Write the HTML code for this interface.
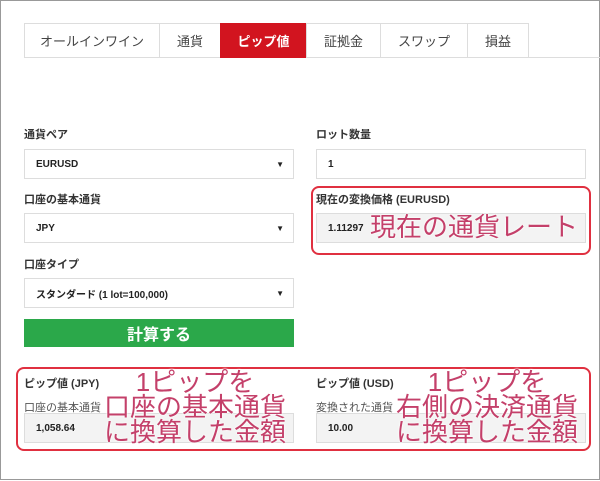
<!DOCTYPE html>
<html><head><meta charset="utf-8"><style>
*{margin:0;padding:0;box-sizing:border-box}
body{width:600px;height:481px;background:#fff;font-family:"Liberation Sans","Noto Sans CJK JP",sans-serif;position:relative;overflow:hidden;color:#333}
.frame{position:absolute;left:0;top:0;width:600px;height:480px;border:1px solid #999}
.tabline{position:absolute;left:24px;right:0;top:57px;border-top:1px solid #ddd}
.tab{position:absolute;top:23px;height:35px;border:1px solid #ddd;border-right:none;font-size:13px;display:flex;align-items:center;justify-content:center;color:#444}
.lab{position:absolute;font-size:11px;font-weight:bold;color:#333}
.box{position:absolute;height:30px;border:1px solid #ddd;font-size:10px;font-weight:bold;display:flex;align-items:center;padding-left:11px;color:#222}
.box .ar{position:absolute;right:9px;font-size:8px}
.gray{background:#f3f3f3}
.red{position:absolute;border:2px solid #e03040;border-radius:8px}
.big{position:absolute;color:#c4406a;font-size:26px;line-height:25px;text-align:center;white-space:nowrap;text-shadow:0 0 2px #fff,0 0 2px #fff}
</style></head><body>
<div class="frame"></div>
<div class="tabline"></div>
<div class="tab" style="left:24px;width:135px">オールインワイン</div>
<div class="tab" style="left:159px;width:61px">通貨</div>
<div class="tab" style="left:220px;width:86px;background:#d2141f;color:#fff;font-weight:bold;border-color:#d2141f">ピップ値</div>
<div class="tab" style="left:306px;width:74px">証拠金</div>
<div class="tab" style="left:380px;width:87px">スワップ</div>
<div class="tab" style="left:467px;width:62px;border-right:1px solid #ddd">損益</div>

<div class="lab" style="left:24px;top:126px">通貨ペア</div>
<div class="box" style="left:24px;top:149px;width:270px">EURUSD<span class="ar">▼</span></div>
<div class="lab" style="left:316px;top:126px">ロット数量</div>
<div class="box" style="left:316px;top:149px;width:270px">1</div>

<div class="lab" style="left:24px;top:191px">口座の基本通貨</div>
<div class="box" style="left:24px;top:213px;width:270px">JPY<span class="ar">▼</span></div>
<div class="red" style="left:311px;top:186px;width:280px;height:69px"></div>
<div class="lab" style="left:316px;top:191px">現在の変換価格 (EURUSD)</div>
<div class="box gray" style="left:316px;top:213px;width:270px">1.11297</div>
<div class="big" style="left:370px;top:215px">現在の通貨レート</div>

<div class="lab" style="left:24px;top:256px">口座タイプ</div>
<div class="box" style="left:24px;top:278px;width:270px">スタンダード (1 lot=100,000)<span class="ar">▼</span></div>
<div style="position:absolute;left:24px;top:319px;width:270px;height:28px;background:#2ba84a;color:#fff;font-weight:bold;font-size:16px;display:flex;align-items:center;justify-content:center">計算する</div>

<div class="red" style="left:16px;top:367px;width:575px;height:84px"></div>
<div class="lab" style="left:24px;top:375px">ピップ値 (JPY)</div>
<div class="lab" style="left:24px;top:399px;font-weight:normal;color:#555">口座の基本通貨</div>
<div class="box gray" style="left:24px;top:413px;width:270px">1,058.64</div>
<div class="lab" style="left:316px;top:375px">ピップ値 (USD)</div>
<div class="lab" style="left:316px;top:399px;font-weight:normal;color:#555">変換された通貨</div>
<div class="box gray" style="left:316px;top:413px;width:270px">10.00</div>
<div class="big" style="left:100px;width:190px;top:370px">1ピップを<br>口座の基本通貨<br>に換算した金額</div>
<div class="big" style="left:392px;width:190px;top:370px">1ピップを<br>右側の決済通貨<br>に換算した金額</div>
</body></html>
